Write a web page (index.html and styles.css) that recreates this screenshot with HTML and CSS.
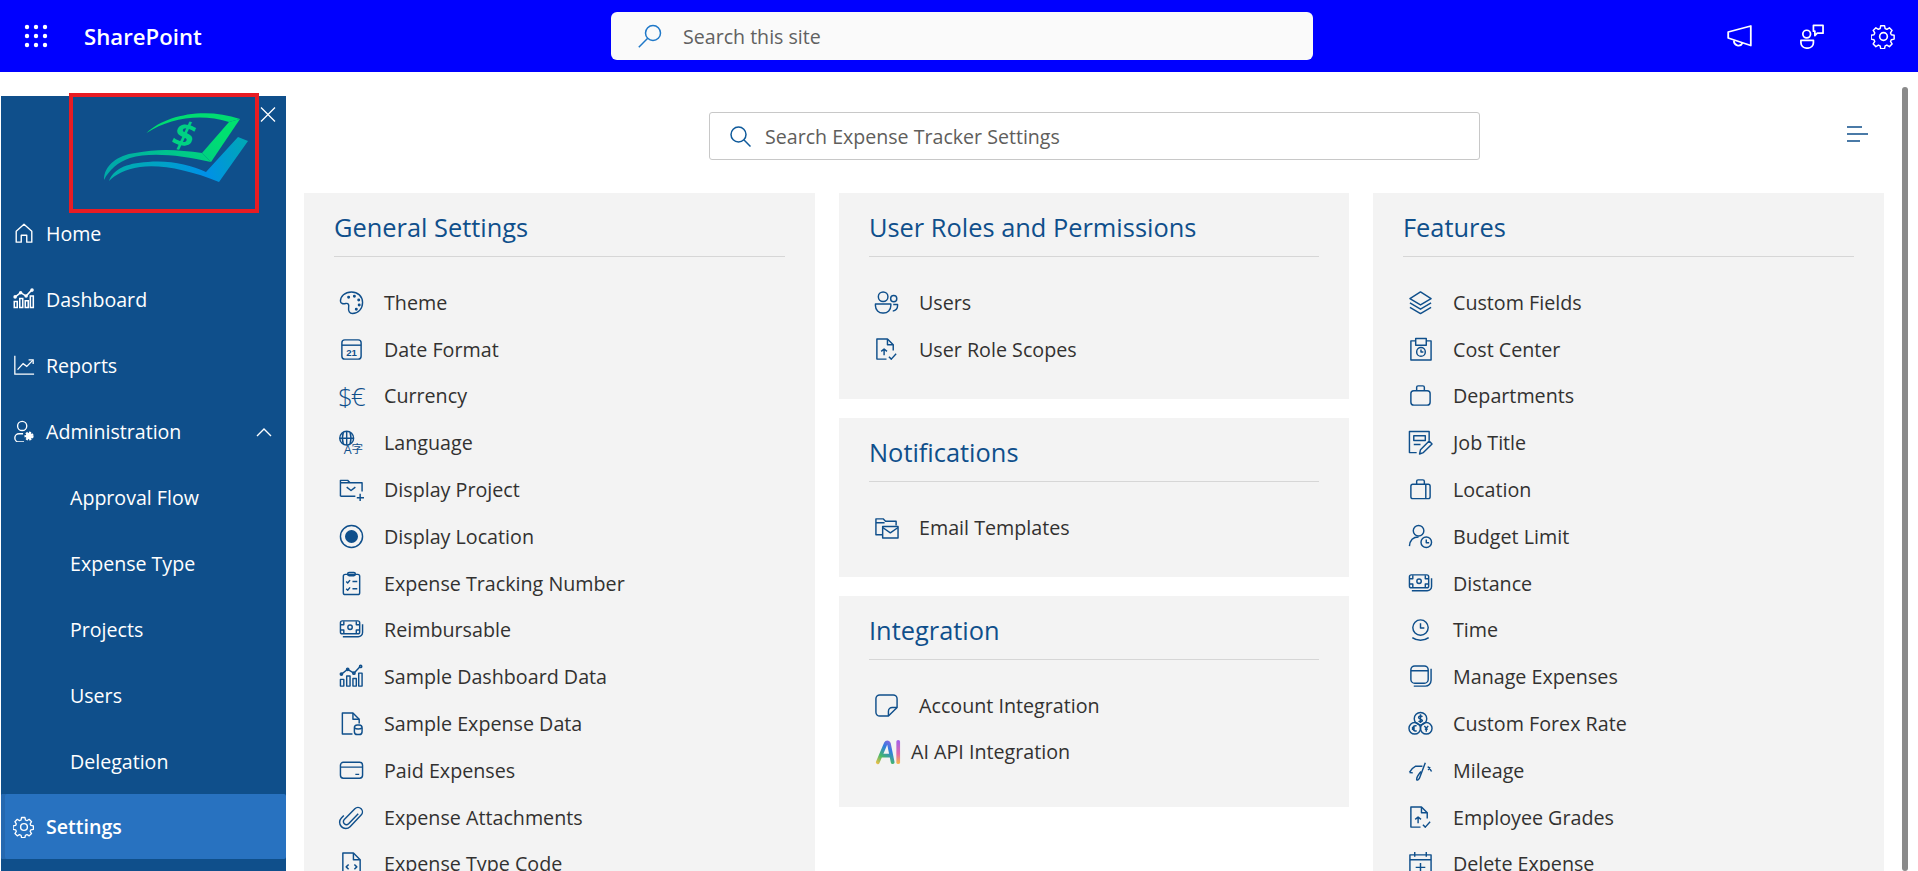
FILE: index.html
```html
<!DOCTYPE html>
<html lang="en">
<head>
<meta charset="utf-8">
<title>Expense Tracker Settings</title>
<link rel="stylesheet" href="styles.css">
</head>
<body>
<svg class="defs" width="0" height="0" aria-hidden="true">
<defs>
<linearGradient id="lg1" gradientUnits="userSpaceOnUse" x1="205" y1="112" x2="125" y2="175"><stop offset="0" stop-color="#00e070"/><stop offset="1" stop-color="#00aaa8"/></linearGradient>
<linearGradient id="lg2" gradientUnits="userSpaceOnUse" x1="245" y1="135" x2="110" y2="180"><stop offset="0" stop-color="#00a8b4"/><stop offset="0.35" stop-color="#0090e8"/><stop offset="0.6" stop-color="#00a0c8"/><stop offset="1" stop-color="#00b0a8"/></linearGradient>
<linearGradient id="aiA" gradientUnits="userSpaceOnUse" x1="2" y1="26" x2="20" y2="2"><stop offset="0" stop-color="#e8c04a"/><stop offset=".3" stop-color="#45b86a"/><stop offset=".65" stop-color="#2f7de0"/><stop offset="1" stop-color="#a05fe0"/></linearGradient>
<linearGradient id="aiI" gradientUnits="userSpaceOnUse" x1="24" y1="2" x2="24" y2="26"><stop offset="0" stop-color="#a45fe8"/><stop offset=".6" stop-color="#e26aa8"/><stop offset="1" stop-color="#f6b64a"/></linearGradient>
<g id="gear"><circle cx="13" cy="13" r="4"/><path d="M10.800 1.500h4.400l.7 3.300 2 .9 2.900-1.800 3.100 3.100-1.800 2.900.9 2 3.300.7v4.400l-3.300.7-.9 2 1.800 2.900-3.100 3.100-2.900-1.800-2 .9-.7 3.300h-4.400l-.7-3.300-2-.9-2.900 1.800-3.100-3.100 1.800-2.900-.9-2-3.300-.7v-4.400l3.300-.7.9-2-1.800-2.900 3.100-3.100 2.900 1.800 2-.9z" transform="translate(.4 .4) scale(.9)"/></g>
<g id="money"><rect x="1.500" y="4" width="20" height="13.500" rx="2"/><circle cx="11.500" cy="10.700" r="2.300"/><path d="M2 8H5V4.500M21 8H18V4.500M2 13.500H5V17M21 13.500H18V17"/><path d="M4 20.500H20a4.500 4.500 0 0 0 4.500-4.500V7.500"/></g>
<g id="upcheck"><path d="M13 23H3V2H14L20 8V14"/><path d="M14 2V8H20"/><path d="M10.500 19V12.500M7.500 15 10.500 12.500 13.500 15"/><path d="M15.500 20.500 18 23 23 17.500"/></g>
<g id="bars"><path d="M1.500 23v-7h3.500v7zM8 23V12.500h3.500V23zM14.500 23v-8H18v8zM20.500 23V9.500H24V23z"/><path d="M2 11 9 5.500 15.500 9.500 22 2.500"/><circle cx="2.500" cy="10.500" r="1.200"/><circle cx="9" cy="5.500" r="1.200"/><circle cx="15.500" cy="9.500" r="1.200"/><circle cx="22.500" cy="2.500" r="1.200"/></g>
</defs>
</svg>
<header class="topbar">
  <svg class="waffle" viewBox="0 0 24 24" width="24" height="24"><g fill="#fff"><circle cx="3" cy="3" r="2.200"/><circle cx="12" cy="3" r="2.200"/><circle cx="21" cy="3" r="2.200"/><circle cx="3" cy="12" r="2.200"/><circle cx="12" cy="12" r="2.200"/><circle cx="21" cy="12" r="2.200"/><circle cx="3" cy="21" r="2.200"/><circle cx="12" cy="21" r="2.200"/><circle cx="21" cy="21" r="2.200"/></g></svg>
  <div class="brand">SharePoint</div>
  <div class="sitesearch">
    <svg viewBox="0 0 24 24" width="24" height="24" fill="none" stroke="#1f78c8" stroke-width="1.500"><circle cx="15" cy="9" r="7.500"/><path d="M9.700 14.300 .8 23.200"/></svg>
    <span>Search this site</span>
  </div>
  <div class="top-actions">
    <svg viewBox="0 0 25 22" width="25" height="22" fill="none" stroke="#fff" stroke-width="1.800" stroke-linejoin="round"><path d="M1.200 7 23.800 1V20.500L1.200 13Z"/><path d="M7 15.500a4.500 4.500 0 0 0 8.500 2.500"/></svg>
    <svg viewBox="0 0 26 26" width="25" height="25" fill="none" stroke="#fff" stroke-width="1.800" stroke-linejoin="round"><circle cx="8" cy="10.500" r="4"/><path d="M2 17H15V19.500A5.500 5.500 0 0 1 9.500 25H7.500A5.500 5.500 0 0 1 2 19.500Z"/><path d="M15 1.500H25V9.500H19L16.500 12V7.500H15Z"/></svg>
    <svg viewBox="0 0 26 26" width="25" height="25" fill="none" stroke="#fff" stroke-width="1.700" stroke-linejoin="round"><use href="#gear"/></svg>
  </div>
</header>

<div class="shell">
  <aside class="sidebar">
    <div class="logo-wrap">
      <div class="logo">
        <svg viewBox="73 97 182 112" width="182" height="112">
          <path d="M146.500 133C165 115 205 107 240 119L229 122C200 113 170 118 146.500 133Z" fill="#00dc72"/>
          <path d="M240 119 211 162 202 153 229 122Z" fill="url(#lg1)"/>
          <path d="M211 162C180 155 150 152 130 158 118 162 109 170 104 180 104 165 118 155 135 153 160 148 180 150 202 153Z" fill="url(#lg1)"/>
          <path d="M238 137 248 141 219 182C190 170 160 164 140 167 125 169 115 175 109 181 113 170 125 163 148 162 170 160 190 165 206 172Z" fill="url(#lg2)"/>
          <text x="185" y="146" class="logo-dollar" text-anchor="middle" transform="rotate(14 185 134)">$</text>
        </svg>
      </div>
      <button class="close" aria-label="Close"><svg viewBox="0 0 16 15" width="16" height="15" fill="none" stroke="#fff" stroke-width="1.300"><path d="M1 .5 15 14.500M15 .5 1 14.500"/></svg></button>
    </div>
    <nav class="nav">
      <a class="nav-item"><svg class="nav-ic" viewBox="0 0 24 24" fill="none" stroke="#fff" stroke-width="1.500" stroke-linejoin="round"><path d="M3.500 22V10L12 2.500 20.500 10V22H15V14.500H9V22Z"/></svg>Home</a>
      <a class="nav-item"><svg class="nav-ic" viewBox="0 0 26 26" fill="none" stroke="#fff" stroke-width="1.800"><use href="#bars"/></svg>Dashboard</a>
      <a class="nav-item"><svg class="nav-ic" viewBox="0 0 24 24" fill="none" stroke="#fff" stroke-width="1.400"><path d="M2 2V22H23"/><path d="M5 17 11 10.500 15 13.500 21.500 7"/><path d="M17 6.500H22V11"/></svg>Reports</a>
      <a class="nav-item"><svg class="nav-ic" viewBox="0 0 24 24" fill="none" stroke="#fff" stroke-width="1.500"><circle cx="10" cy="6.500" r="5"/><path d="M11 15H6.500A4.500 4.500 0 0 0 6.500 24H12"/><circle cx="17.500" cy="17.500" r="3.500" fill="#fff" stroke-width="3" stroke-dasharray="2 1.200"/></svg>Administration<svg class="chev" viewBox="0 0 16 10" width="16" height="10" fill="none" stroke="#fff" stroke-width="1.400"><path d="M1 9 8 2 15 9"/></svg></a>
      <a class="nav-item sub">Approval Flow</a>
      <a class="nav-item sub">Expense Type</a>
      <a class="nav-item sub">Projects</a>
      <a class="nav-item sub">Users</a>
      <a class="nav-item sub">Delegation</a>
      <a class="nav-item active"><svg class="nav-ic" viewBox="0 0 26 26" fill="none" stroke="#fff" stroke-width="1.700" stroke-linejoin="round"><use href="#gear"/></svg>Settings</a>
    </nav>
  </aside>

  <main class="main">
    <div class="toolbar">
      <div class="settings-search">
        <svg viewBox="0 0 21 21" width="21" height="21" fill="none" stroke="#0f5a9b" stroke-width="1.500"><circle cx="8.500" cy="8.500" r="7.500"/><path d="M13.800 13.800 20.500 20.500"/></svg>
        <span>Search Expense Tracker Settings</span>
      </div>
      <svg class="menu-ic" viewBox="0 0 21 16" width="21" height="16" fill="none" stroke="#0f4f8b" stroke-width="1.300"><path d="M0 1H15M0 8H21M0 15H13"/></svg>
    </div>
    <div class="grid">
      <div class="col">
        <section class="card">
          <h2>General Settings</h2>
          <ul>
            <li><svg class="ic" viewBox="0 0 26 26"><path d="M13 2C6 2 1.500 6.500 1.500 11.500c0 3 3 3 5.500 2.500 3-.5 3.500 1.500 3 4.500-.5 3.500 1 6 4 6 6 0 10.500-5 10.500-11.500C24.500 6.500 19.500 2 13 2Z"/><circle cx="10" cy="7.500" r=".8"/><circle cx="16" cy="6.500" r=".8"/><circle cx="20.500" cy="10.500" r=".8"/><circle cx="21" cy="15.500" r=".8"/><circle cx="18" cy="20" r=".8"/></svg>Theme</li>
            <li><svg class="ic" viewBox="0 0 26 26"><rect x="3" y="3" width="20" height="20" rx="3"/><path d="M3 8.500H23"/><text x="13" y="20" class="ic-txt">21</text></svg>Date Format</li>
            <li><span class="ic-cur">$€</span>Currency</li>
            <li><svg class="ic" viewBox="0 0 26 26"><circle cx="8" cy="8.500" r="7.200"/><path d="M.8 8.500H15.200M8 1.300V15.700M4.500 2.500C3 7 3 10 4.500 14.500M11.500 2.500C13 7 13 10 11.500 14.500"/><text x="9" y="25" class="ic-a">A</text><text x="19" y="24" class="ic-z">字</text></svg>Language</li>
            <li><svg class="ic" viewBox="0 0 26 26"><path d="M1.500 20V3.500H9L11.500 6H24V15M1.500 20H17M1.500 6H11.500"/><path d="M8 10.500 12.500 14 17 10.500"/><path d="M22 17.500V25M18.500 21.500H26"/></svg>Display Project</li>
            <li><svg class="ic" viewBox="0 0 26 26"><circle cx="13" cy="13" r="11.500"/><circle cx="13" cy="13" r="6" class="ic-fill"/></svg>Display Location</li>
            <li><svg class="ic" viewBox="0 0 26 26"><rect x="4.500" y="3.500" width="17" height="21" rx="2"/><rect x="9" y="1.500" width="8" height="3.500" rx="1.500"/><path d="M7.500 11 9 12.500 11.500 9.500M14 11H19M7.500 18.500 9 20 11.500 17M14 18.500H19"/></svg>Expense Tracking Number</li>
            <li><svg class="ic" viewBox="0 0 26 26"><use href="#money"/></svg>Reimbursable</li>
            <li><svg class="ic" viewBox="0 0 26 26"><use href="#bars"/></svg>Sample Dashboard Data</li>
            <li><svg class="ic" viewBox="0 0 26 26"><path d="M14 24H3.500V2H14.500L21 8.500V13"/><path d="M14.500 2V8.500H21"/><rect x="16" y="14.500" width="8" height="10" rx="3"/><path d="M16 17.500C18 19 22 19 24 17.500"/></svg>Sample Expense Data</li>
            <li><svg class="ic" viewBox="0 0 26 26"><rect x="1.500" y="4.500" width="23" height="16.500" rx="3"/><path d="M1.500 9.500H24.500M17 17H21"/></svg>Paid Expenses</li>
            <li><svg class="ic" viewBox="0 0 26 26"><path d="M20 9 10 19.500a3 3 0 0 1-4.500-4.500L16.500 4a4.500 4.500 0 0 1 6.500 6.500L11.500 22.500a6.300 6.300 0 0 1-9-9L5 11"/></svg>Expense Attachments</li>
            <li><svg class="ic" viewBox="0 0 26 26"><path d="M4 24V2H15L22 9V24Z"/><path d="M15 2V9H22M10 14 7.500 16.500 10 19M16 14 18.500 16.500 16 19"/></svg>Expense Type Code</li>
          </ul>
        </section>
      </div>
      <div class="col">
        <section class="card">
          <h2>User Roles and Permissions</h2>
          <ul>
            <li><svg class="ic" viewBox="0 0 26 26"><circle cx="9.500" cy="7" r="5"/><circle cx="20.500" cy="9" r="3.200"/><path d="M1.500 14.500H17.500V16.500A7.500 7.500 0 0 1 10 24H9A7.500 7.500 0 0 1 1.500 16.500Z"/><path d="M20 15H24.500V16.500C24.500 19.500 22.500 21.500 19.500 22"/></svg>Users</li>
            <li><svg class="ic" viewBox="0 0 26 26"><use href="#upcheck"/></svg>User Role Scopes</li>
          </ul>
        </section>
        <section class="card">
          <h2>Notifications</h2>
          <ul>
            <li><svg class="ic" viewBox="0 0 26 26"><path d="M9 20.500H2V4H9.500L12 6.500H23V11M2 8H11"/><rect x="9" y="12" width="16" height="12"/><path d="M9 13 17 18.500 25 13"/></svg>Email Templates</li>
          </ul>
        </section>
        <section class="card">
          <h2>Integration</h2>
          <ul>
            <li><svg class="ic" viewBox="0 0 26 26"><path d="M15 24H6A4 4 0 0 1 2 20V6A4 4 0 0 1 6 2H20A4 4 0 0 1 24 6V15Z"/><path d="M15 24V19A4 4 0 0 1 19 15H24"/></svg>Account Integration</li>
            <li class="ai"><svg class="ai-ic" viewBox="0 0 28 28" fill="none" stroke-width="4" stroke-linecap="round" stroke-linejoin="round"><path d="M3 25 11.500 5C12.500 3 14 3 15 5L19 25M6.500 18H17" stroke="url(#aiA)"/><path d="M25 3V25" stroke="url(#aiI)"/></svg>AI API Integration</li>
          </ul>
        </section>
      </div>
      <div class="col">
        <section class="card">
          <h2>Features</h2>
          <ul>
            <li><svg class="ic" viewBox="0 0 26 26"><path d="M13 2 24 9 13 15.500 2 9Z"/><path d="M2 13.500 13 20 24 13.500M2 18 13 24.500 24 18"/></svg>Custom Fields</li>
            <li><svg class="ic" viewBox="0 0 26 26"><path d="M8 4H3V24H24V4H19"/><rect x="8" y="1.500" width="11" height="7"/><circle cx="13.500" cy="15.500" r="4.500"/><path d="M13.500 13V15.500H16"/></svg>Cost Center</li>
            <li><svg class="ic" viewBox="0 0 26 26"><rect x="3" y="8" width="20" height="15" rx="3"/><path d="M9 8V4.500A1.500 1.500 0 0 1 10.500 3H15.500A1.500 1.500 0 0 1 17 4.500V8"/></svg>Departments</li>
            <li><svg class="ic" viewBox="0 0 26 26"><path d="M9 23.500H1.500V1.500H22V11"/><path d="M6 6H18V11H6ZM6 15H13"/><path d="M12 25 13 20.500 22 11.500 25 14.500 16 23.500Z"/></svg>Job Title</li>
            <li><svg class="ic" viewBox="0 0 26 26"><rect x="3" y="7.500" width="20" height="15" rx="2"/><path d="M9 7.500V4.500A1.500 1.500 0 0 1 10.500 3H15.500A1.500 1.500 0 0 1 17 4.500V7.500M18.500 8V22"/></svg>Location</li>
            <li><svg class="ic" viewBox="0 0 26 26"><circle cx="11" cy="7" r="5.500"/><path d="M1.500 23C2 16.500 5 13.500 11 13.500"/><circle cx="19" cy="19" r="5.500"/><path d="M19 16V19.500H22"/></svg>Budget Limit</li>
            <li><svg class="ic" viewBox="0 0 26 26"><use href="#money"/></svg>Distance</li>
            <li><svg class="ic" viewBox="0 0 26 26"><circle cx="13" cy="11" r="8"/><path d="M13 6.500V11.500H17M4.500 21.500C9 25 17 25 21.500 21.500"/></svg>Time</li>
            <li><svg class="ic" viewBox="0 0 26 26"><rect x="3" y="2" width="18" height="18" rx="4"/><path d="M3 7H21M24 5V17A6 6 0 0 1 18 23H6"/></svg>Manage Expenses</li>
            <li><svg class="ic" viewBox="0 0 26 26"><circle cx="13" cy="8" r="6.500"/><circle cx="7" cy="18" r="6"/><circle cx="19" cy="18" r="6"/><path d="M13 3.500V12.500M15 6C14 4.800 11 5 11 6.800S15 8.200 15 10C15 11.500 12 11.500 11 10.500M9 15.500C6 14.500 5 17 5 18S6 21.500 9 20.500M4 17.500H7M4 19H7M17 15.500 19 18 21 15.500M19 18V21.500M17.500 19H20.500"/></svg>Custom Forex Rate</li>
            <li><svg class="ic" viewBox="0 0 26 26"><path d="M1.500 15C3 12 5 10 8 8.500H15M1.500 15 5 15.500M20.500 9C22 10 23.500 12 24.500 14M21 12.500 23 9.500"/><path d="M18 5 12.500 19.500C11.500 23 9 24 9 22 9 20 11 17 13.500 14"/></svg>Mileage</li>
            <li><svg class="ic" viewBox="0 0 26 26"><use href="#upcheck"/></svg>Employee Grades</li>
            <li><svg class="ic" viewBox="0 0 26 26"><rect x="2" y="4" width="22" height="20.500"/><path d="M2 9H24M7 1V6M19 1V6M13 12.500V22M8 17H18"/></svg>Delete Expense</li>
          </ul>
        </section>
      </div>
    </div>
  </main>
  <div class="scrollbar"><div class="thumb"></div></div>
</div>
</body>
</html>
```

FILE: styles.css
```css
* { box-sizing: border-box; }
html, body { margin: 0; height: 100%; overflow: hidden; background: #fff; }
body { font-family: "Open Sans", "Noto Sans", "Liberation Sans", sans-serif; color: #323130; }
.defs { position: absolute; }

.topbar { height: 72px; background: #0000ff; display: flex; align-items: center; color: #fff; }
.waffle { margin-left: 24px; flex: none; }
.brand { flex: none; margin-left: 36px; width: 280px; font-size: 22.200px; font-weight: 600; }
.sitesearch { flex: none; margin-left: 247px; width: 702px; height: 48px; background: #fafafa; border-radius: 6px; display: flex; align-items: center; padding-left: 27px; gap: 21px; font-size: 19.600px; color: #616161; }
.top-actions { margin-left: auto; display: flex; align-items: center; gap: 47px; margin-right: 22px; }

.shell { display: flex; height: 799px; }
.sidebar { flex: none; width: 285px; margin-left: 1px; margin-top: 24px; background: #0f4f8b; color: #fff; }
.logo-wrap { position: relative; height: 104px; }
.logo { position: absolute; left: 68px; top: -3px; width: 190px; height: 120px; border: 4px solid #e81c23; overflow: hidden; }
.logo svg { display: block; }
.logo-dollar { font-family: "DejaVu Sans", sans-serif; font-weight: 700; font-style: italic; font-size: 33px; fill: #00d183; }
.close { position: absolute; left: 259px; top: 11px; padding: 0; background: none; border: 0; line-height: 0; }
.nav-item { height: 66px; display: flex; align-items: center; font-size: 19.600px; padding-left: 12px; color: #fff; position: relative; }
.nav-ic { width: 22px; height: 22px; margin-right: 11px; flex: none; }
.chev { position: absolute; right: 14px; top: 29px; }
.nav-item.sub { padding-left: 69px; }
.nav-item.active { background: #2872c0; font-weight: 600; border-radius: 2px; box-shadow: inset 4px 0 0 #2568b0; height: 65px; }

.main { flex: 1; min-width: 0; padding-left: 18px; padding-top: 40px; }
.toolbar { position: relative; height: 81px; }
.settings-search { position: absolute; left: 405px; top: 0; width: 771px; height: 48px; border: 1px solid #c8c8c8; border-radius: 3px; display: flex; align-items: center; padding-left: 20px; gap: 14px; font-size: 19.600px; color: #605e5c; }
.menu-ic { position: absolute; left: 1543px; top: 14px; }
.grid { display: grid; grid-template-columns: 511px 510px 511px; column-gap: 24px; align-items: start; }
.col { display: flex; flex-direction: column; gap: 19px; }
.card { background: #f3f3f3; padding: 0 30px; }
.card h2 { margin: 0; height: 64px; padding-top: 16px; font-size: 25.400px; line-height: 36px; font-weight: 400; color: #0f4f8b; border-bottom: 1px solid #d6d6d6; }
.card ul { list-style: none; margin: 0; padding: 22px 0 26.200px; }
.card li { height: 46.800px; display: flex; align-items: center; font-size: 19.700px; color: #323130; }
.card li.ai { margin-bottom: 5px; }
.ic { width: 25px; height: 25px; margin-left: 5px; margin-right: 20px; flex: none; fill: none; stroke: #0f4f8b; stroke-width: 1.500; stroke-linejoin: round; overflow: visible; }
.ic-fill { fill: #0f4f8b; }
.ic-txt { font-family: "Liberation Sans", sans-serif; font-size: 10px; font-weight: 700; fill: #0f4f8b; stroke: none; text-anchor: middle; }
.ic-cur { flex: none; width: 45px; margin-left: 4px; margin-right: 1px; font-weight: 300; font-size: 26px; line-height: 30px; letter-spacing: -2px; color: #0f4f8b; }
.ic-a { font-family: "Open Sans", sans-serif; font-size: 13px; fill: #0f4f8b; stroke: none; text-anchor: middle; }
.ic-z { font-family: "Noto Sans CJK SC", sans-serif; font-size: 12px; fill: #0f4f8b; stroke: none; text-anchor: middle; }
.ai-ic { width: 26px; height: 26px; margin-left: 6px; margin-right: 10px; flex: none; }
.scrollbar { position: absolute; left: 1902px; top: 87px; width: 6px; bottom: 0; }
.thumb { height: 100%; background: #8a8a8a; border-radius: 3px; }
```
